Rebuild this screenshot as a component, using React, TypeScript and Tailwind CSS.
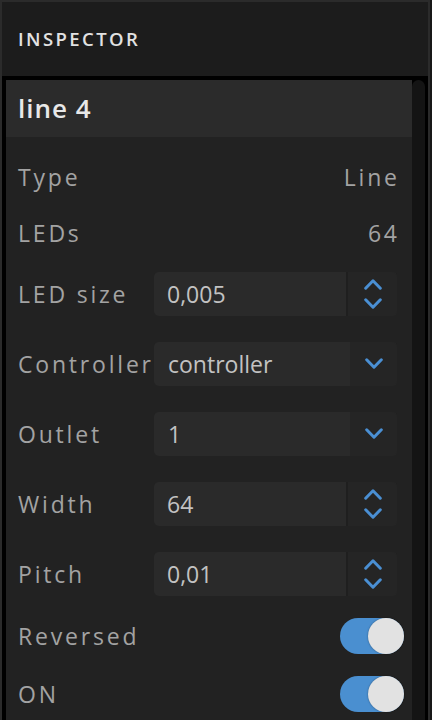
const font = { fontFamily: '"Open Sans", "Noto Sans", sans-serif' };

const Chevron = ({ up }: { up?: boolean }) => (
  <svg width="20" height="12" viewBox="0 0 20 12" fill="none" className="text-[#4a8fd3]">
    <path
      d={up ? "M2.7 10.2 L10 2.8 L17.3 10.2" : "M2.7 1.8 L10 9.2 L17.3 1.8"}
      stroke="currentColor"
      strokeWidth="3"
      strokeLinecap="round"
      strokeLinejoin="round"
    />
  </svg>
);

const Label = ({ children }: { children: string }) => (
  <span className="min-w-[136px] shrink-0 text-[23px] tracking-[2.8px] text-[#a3a3a3] leading-none whitespace-nowrap">
    {children}
  </span>
);

const NumberField = ({ label, value }: { label: string; value: string }) => (
  <div className="flex items-center h-[44px]">
    <Label>{label}</Label>
    <div className="flex-1 h-full flex rounded-[5px] overflow-hidden bg-[#2a2a2a]">
      <div className="flex-1 flex items-center pl-[13px] text-[23px] text-[#c2c2c2]">{value}</div>
      <div className="w-[51px] flex flex-col items-center justify-center gap-[8px] bg-[#252525] border-l-2 border-[#1f1f1f]">
        <Chevron up />
        <Chevron />
      </div>
    </div>
  </div>
);

const SelectField = ({ label, value }: { label: string; value: string }) => (
  <div className="flex items-center h-[44px]">
    <Label>{label}</Label>
    <div className="flex-1 h-full flex rounded-[5px] overflow-hidden bg-[#2a2a2a]">
      <div className="flex-1 flex items-center pl-[14px] text-[23px] text-[#c2c2c2]">{value}</div>
      <div className="w-[47px] flex items-center justify-center bg-[#252525]">
        <Chevron />
      </div>
    </div>
  </div>
);

const ToggleField = ({ label }: { label: string }) => (
  <div className="flex items-center justify-between h-[36px] mt-[22px] -mr-[7px]">
    <Label>{label}</Label>
    <div className="w-[64px] h-[36px] rounded-full bg-[#4a8fd0] flex justify-end">
      <div className="w-[36px] h-[36px] rounded-full bg-[#e2e2e2] shadow-[0_0_2px_rgba(0,0,0,0.4)]" />
    </div>
  </div>
);

const InfoRow = ({ label, value, className }: { label: string; value: string; className: string }) => (
  <div className={`flex items-center justify-between h-[44px] ${className}`}>
    <Label>{label}</Label>
    <span className="text-[23px] tracking-[2.8px] text-[#a3a3a3] leading-none -mr-[2.8px]">{value}</span>
  </div>
);

export default function App() {
  return (
    <div className="w-[432px] h-[720px] overflow-hidden bg-[#181818] pr-[2px]" style={font}>
      <div className="h-full flex flex-col bg-[#1c1c1c] border-t-2 border-x-2 border-[#2b2b2b]">
        <div className="h-[74px] shrink-0 flex items-center pl-[16px]">
          <h1 className="text-[18.5px] font-semibold tracking-[2.4px] text-[#e2e2e2]">INSPECTOR</h1>
        </div>
        <div className="flex-1 flex bg-black pt-[4px] pl-[4px] pr-[3px] min-h-0">
          <div className="flex-1 flex flex-col min-w-0">
            <div className="h-[57px] shrink-0 flex items-center pl-[12px] bg-[#2b2b2b]">
              <h2 className="text-[26px] font-semibold tracking-[1px] text-[#e8e8e8]">line 4</h2>
            </div>
            <div className="flex-1 flex flex-col bg-[#222222] pl-[12px] pr-[15px] pt-[18px]">
              <InfoRow label="Type" value="Line" className="" />
              <InfoRow label="LEDs" value="64" className="mt-[12px]" />
              <div className="mt-[17px]">
                <NumberField label="LED size" value="0,005" />
              </div>
              <div className="mt-[26px]">
                <SelectField label="Controller" value="controller" />
              </div>
              <div className="mt-[26px]">
                <SelectField label="Outlet" value="1" />
              </div>
              <div className="mt-[26px]">
                <NumberField label="Width" value="64" />
              </div>
              <div className="mt-[26px]">
                <NumberField label="Pitch" value="0,01" />
              </div>
              <ToggleField label="Reversed" />
              <ToggleField label="ON" />
            </div>
          </div>
          <div className="w-[13px] shrink-0 rounded-t-[7px] bg-[#141414]" />
        </div>
      </div>
    </div>
  );
}
